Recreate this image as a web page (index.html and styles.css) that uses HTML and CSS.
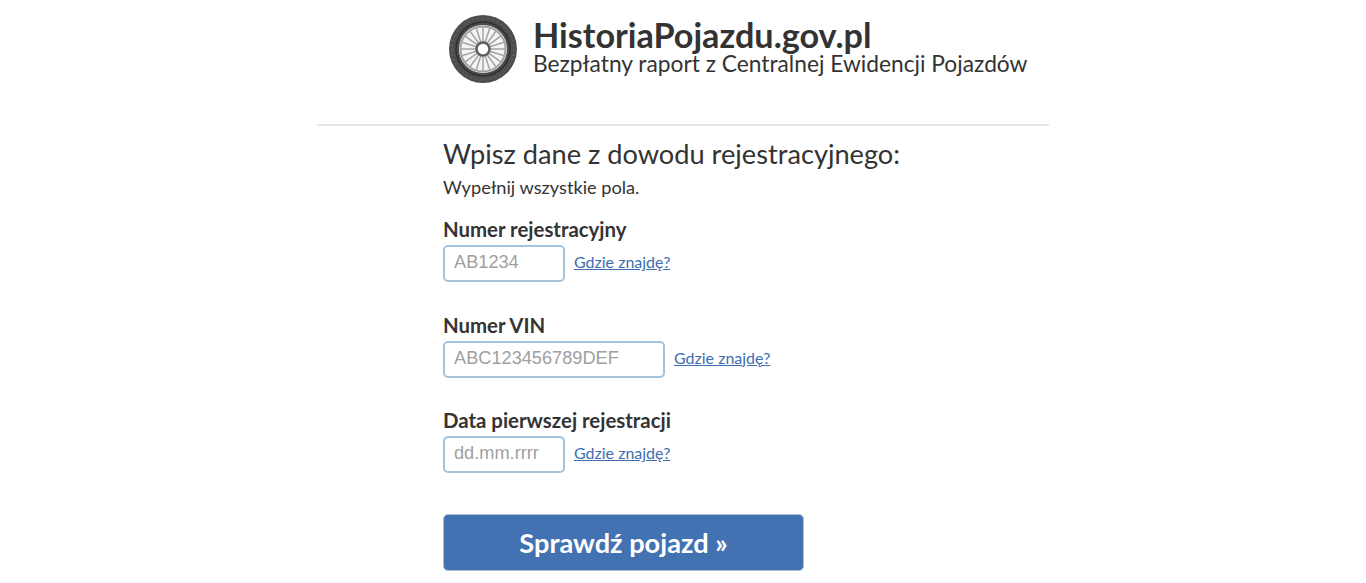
FILE: index.html
```html
<!DOCTYPE html>
<html lang="pl">
<head>
    <meta charset="UTF-8">
    <meta name="viewport" content="width=device-width, initial-scale=1.0">
    <title>Historia Pojazdu</title>

    <link rel="stylesheet" href="styles.css">
</head>
<body>
    <div id="page">
        <div id="header">
            <svg class="logo" width="68" height="68" viewBox="0 0 68 68">
                <circle cx="34" cy="34" r="34" fill="#4d4d4d"/>
                <circle cx="34" cy="34" r="31" fill="none" stroke="#6e6e6e" stroke-width="1" stroke-dasharray="2 3"/>
                <circle cx="34" cy="34" r="27" fill="none" stroke="#2f2f2f" stroke-width="1.5"/>
                <circle cx="34" cy="34" r="24" fill="#f4f4f4"/>
                <circle cx="34" cy="34" r="22.5" fill="none" stroke="#a2a2a2" stroke-width="2"/>
                <g stroke="#a4a4a4" stroke-width="1.5">
                    <line x1="34" y1="12" x2="34" y2="56"/>
                    <line x1="34" y1="12" x2="34" y2="56" transform="rotate(18 34 34)"/>
                    <line x1="34" y1="12" x2="34" y2="56" transform="rotate(36 34 34)"/>
                    <line x1="34" y1="12" x2="34" y2="56" transform="rotate(54 34 34)"/>
                    <line x1="34" y1="12" x2="34" y2="56" transform="rotate(72 34 34)"/>
                    <line x1="34" y1="12" x2="34" y2="56" transform="rotate(90 34 34)"/>
                    <line x1="34" y1="12" x2="34" y2="56" transform="rotate(108 34 34)"/>
                    <line x1="34" y1="12" x2="34" y2="56" transform="rotate(126 34 34)"/>
                    <line x1="34" y1="12" x2="34" y2="56" transform="rotate(144 34 34)"/>
                    <line x1="34" y1="12" x2="34" y2="56" transform="rotate(162 34 34)"/>
                </g>
                <circle cx="34" cy="34" r="6.5" fill="#fff" stroke="#5e5e5e" stroke-width="2.5"/>
            </svg>
            <div class="brand">
                <div class="brand-title">HistoriaPojazdu.gov.pl</div>
                <div class="brand-sub">Bezpłatny raport z Centralnej Ewidencji Pojazdów</div>
            </div>
        </div>

        <div id="content">
            <h1>Wpisz dane z dowodu rejestracyjnego:</h1>
            <p class="hint">Wypełnij wszystkie pola.</p>

            <div class="field">
                <label for="reg">Numer rejestracyjny</label>
                <div class="row">
                    <input id="reg" class="short" type="text" placeholder="AB1234">
                    <a href="#">Gdzie znajdę?</a>
                </div>
            </div>

            <div class="field">
                <label for="vin">Numer VIN</label>
                <div class="row">
                    <input id="vin" class="long" type="text" placeholder="ABC123456789DEF">
                    <a href="#">Gdzie znajdę?</a>
                </div>
            </div>

            <div class="field">
                <label for="date">Data pierwszej rejestracji</label>
                <div class="row">
                    <input id="date" class="short" type="text" placeholder="dd.mm.rrrr">
                    <a href="#">Gdzie znajdę?</a>
                </div>
            </div>

            <button type="button">Sprawdź pojazd »</button>
        </div>
    </div>
</body>
</html>
```

FILE: styles.css
```css
* {
    box-sizing: border-box;
}

html, body {
    height: 100%;
    overflow: hidden;
}

body {
    margin: 0;
    background-color: #fff;
    color: #333;
    font-family: Lato, "Liberation Sans", sans-serif;
}

#page {
    width: 732px;
    margin: 0 auto;
}

#header {
    display: flex;
    align-items: flex-start;
    gap: 16px;
    height: 126px;
    padding: 15px 0 0 132px;
    border-bottom: 2px solid #e4e4e4;
}

.brand {
    padding-top: 2px;
}

.brand-title {
    font-size: 34.2px;
    font-weight: 700;
    line-height: 35px;
}

.brand-sub {
    font-size: 22.75px;
    line-height: 23px;
}

#content {
    padding: 11px 0 0 126px;
}

h1 {
    margin: 0;
    font-size: 27.2px;
    font-weight: 400;
    line-height: 34px;
}

.hint {
    margin: 5px 0 0;
    font-size: 18.2px;
    line-height: 22px;
}

.field {
    margin-bottom: 29.5px;
}

.field:first-of-type {
    margin-top: 18px;
}

label {
    display: block;
    margin-bottom: 2px;
    font-size: 20.4px;
    font-weight: 700;
    line-height: 27px;
}

.row {
    display: flex;
    align-items: center;
    gap: 9px;
}

input {
    height: 37px;
    padding: 0 9px 2px;
    border: 2px solid #a3c2dc;
    border-radius: 5px;
    font-family: "Liberation Sans", Arial, sans-serif;
    font-size: 18.2px;
}

input::placeholder {
    color: #a0a0a0;
}

input.short {
    width: 122px;
}

input.long {
    width: 222px;
}

a {
    padding-bottom: 4px;
    color: #3e6eae;
    font-size: 16px;
}

button {
    display: block;
    width: 361px;
    height: 57px;
    margin-top: 41px;
    border: 1px solid #a9bfd8;
    border-radius: 5px;
    background-color: #4372b2;
    color: #fff;
    font-family: Lato, "Liberation Sans", sans-serif;
    font-size: 27.2px;
    font-weight: 700;
}
```
